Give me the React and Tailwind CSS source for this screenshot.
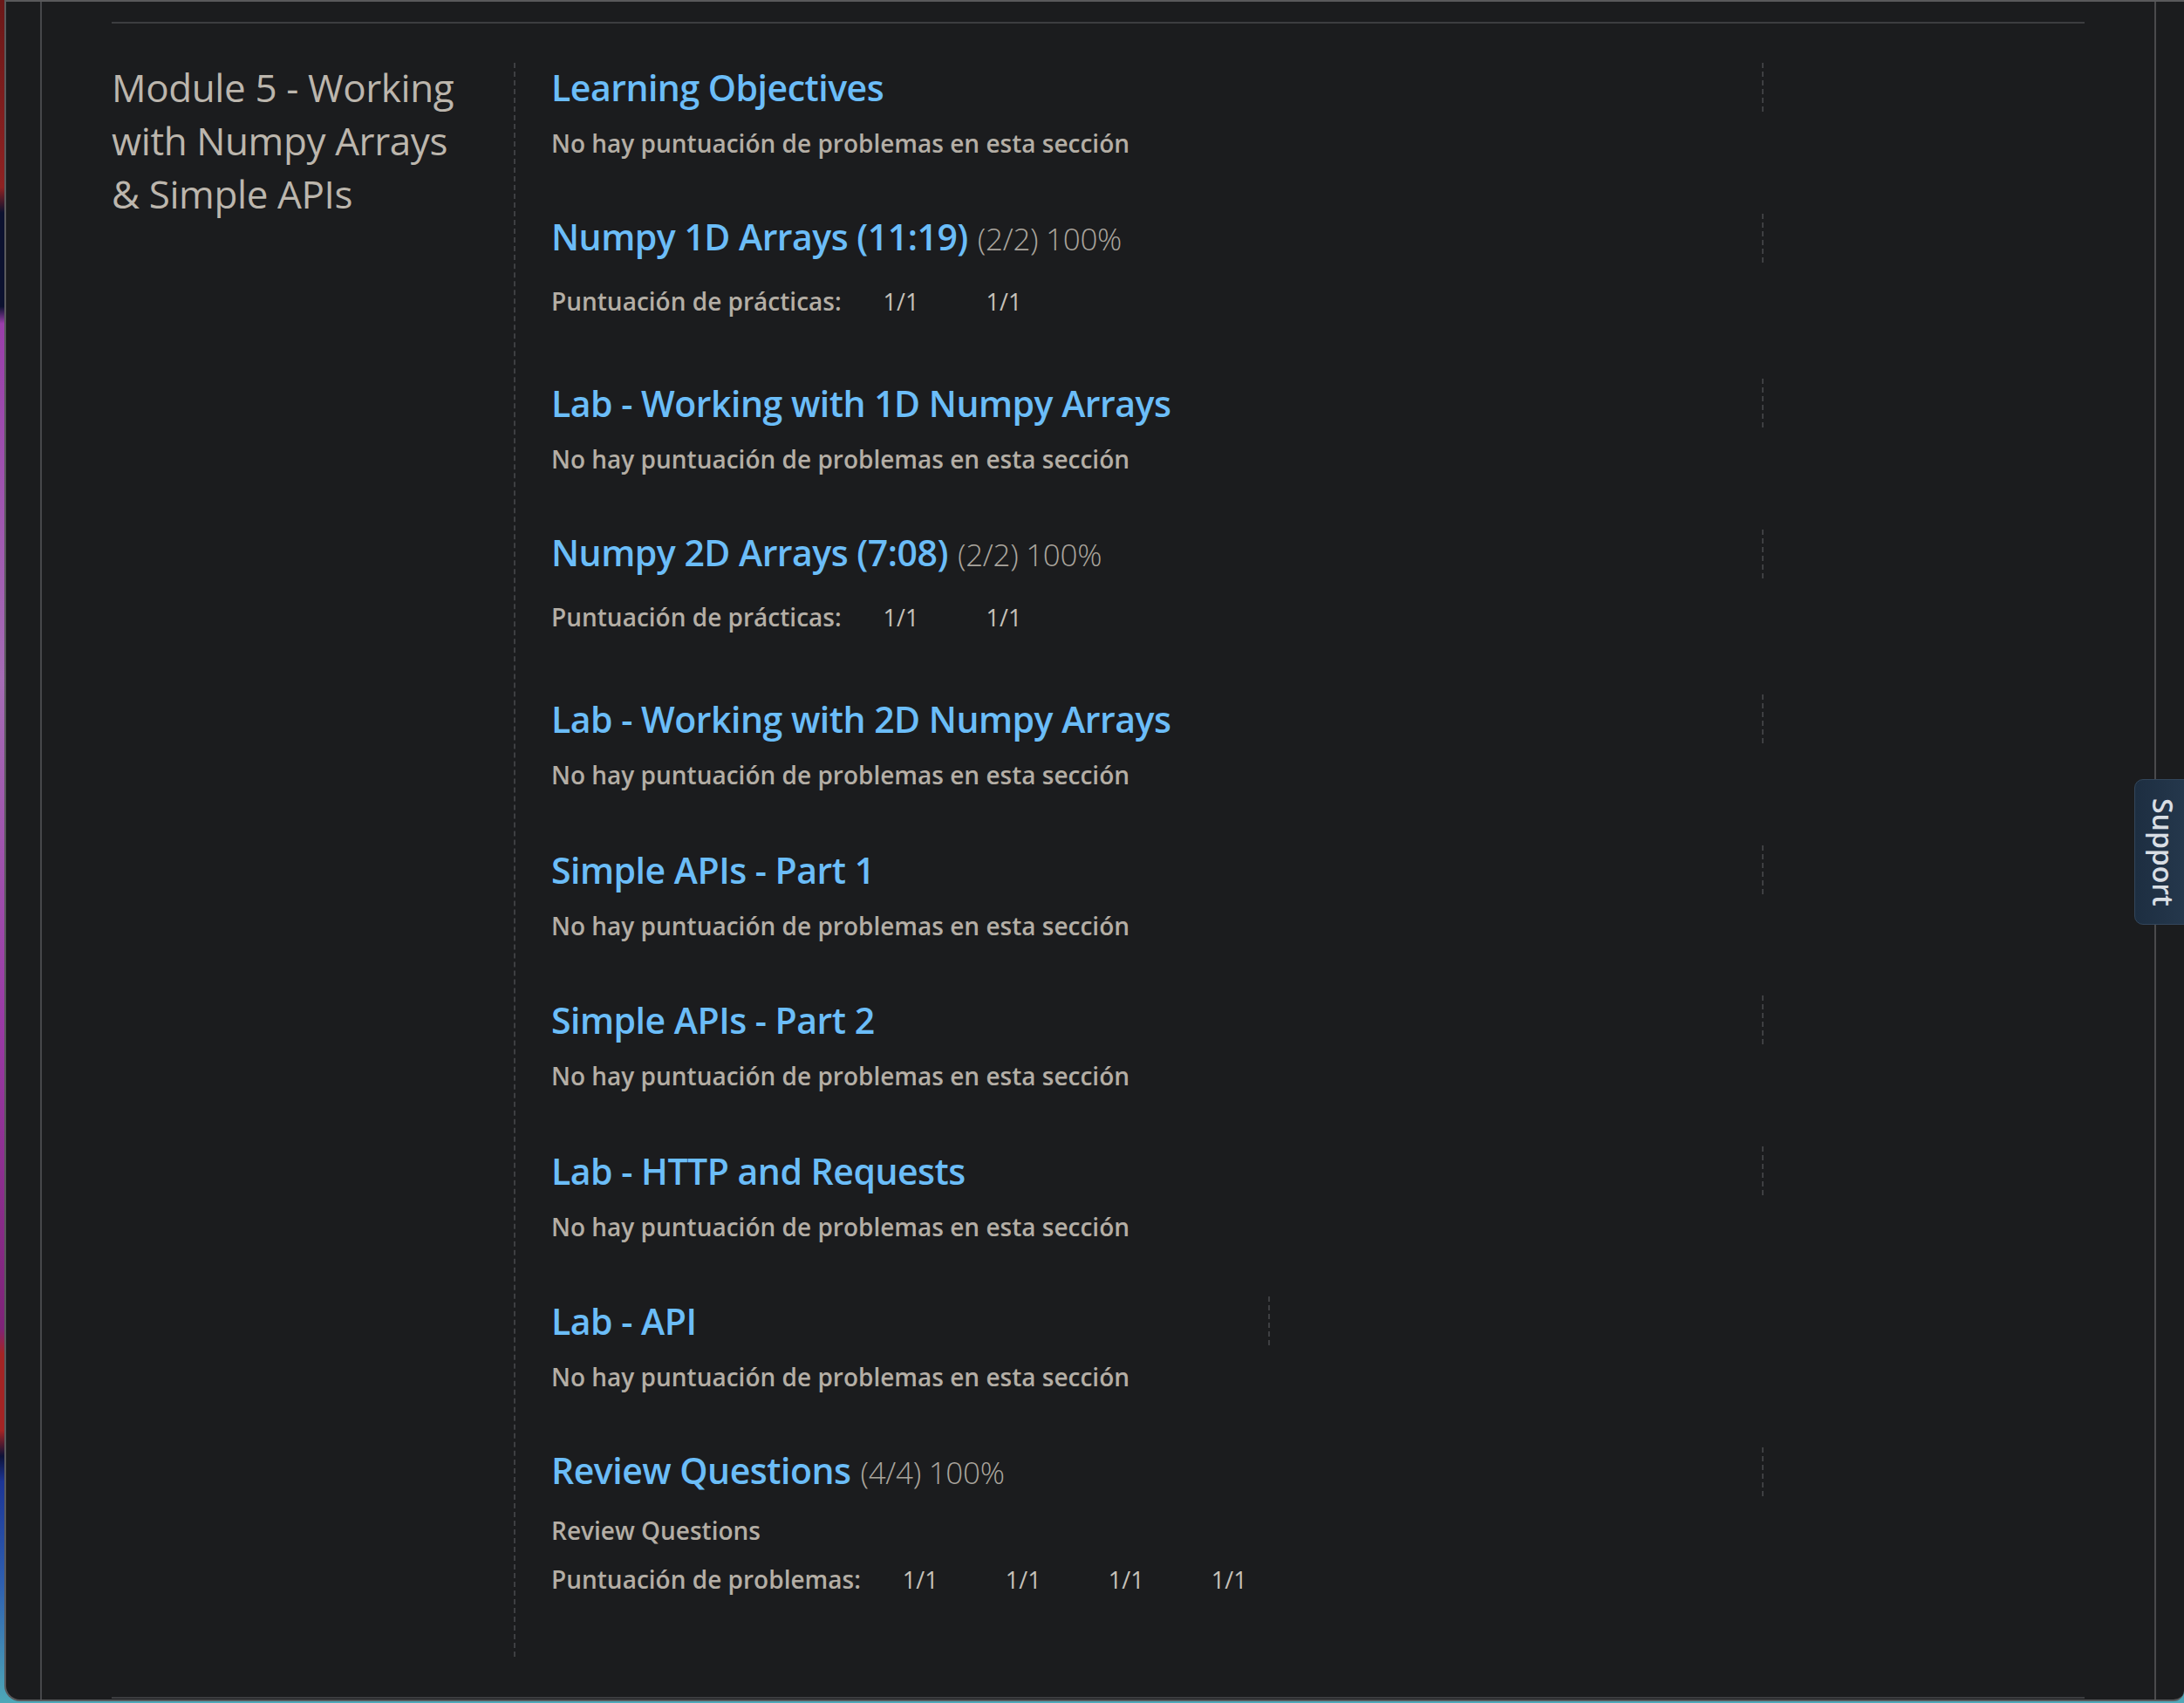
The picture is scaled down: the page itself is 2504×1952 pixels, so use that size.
import React from "react";

const NO = "No hay puntuación de problemas en esta sección";

const sections = [
  { title: "Learning Objectives", sub: NO },
  { title: "Numpy 1D Arrays (11:19)", score: "(2/2) 100%", label: "Puntuación de prácticas:", vals: ["1/1", "1/1"] },
  { title: "Lab - Working with 1D Numpy Arrays", sub: NO },
  { title: "Numpy 2D Arrays (7:08)", score: "(2/2) 100%", label: "Puntuación de prácticas:", vals: ["1/1", "1/1"] },
  { title: "Lab - Working with 2D Numpy Arrays", sub: NO },
  { title: "Simple APIs - Part 1", sub: NO },
  { title: "Simple APIs - Part 2", sub: NO },
  { title: "Lab - HTTP and Requests", sub: NO },
  { title: "Lab - API", sub: NO, narrow: true },
  { title: "Review Questions", score: "(4/4) 100%", sub: "Review Questions", label: "Puntuación de problemas:", vals: ["1/1", "1/1", "1/1", "1/1"], review: true },
];

function Section({ s }) {
  return (
    <div className="mb-[60.5px]">
      <div
        className={
          s.narrow
            ? "w-[824px] h-[56px] border-r-2 border-dashed border-[#3e3f42] flex items-center"
            : "w-[1390px] h-[56px] border-r-2 border-dashed border-[#3e3f42] flex items-center"
        }
      >
        <h3 className="text-[41px] leading-[56px] tracking-[-0.5px] font-semibold text-[#6bbdf8] whitespace-nowrap">
          {s.title}
          {s.score && (
            <span className="ml-[11px] text-[35px] tracking-[-0.3px] font-light text-[#aaa59d]">{s.score}</span>
          )}
        </h3>
      </div>
      {s.sub && (
        <p
          className={
            s.review
              ? "mt-[19px] text-[28px] leading-[40px] font-semibold text-[#b4aea5]"
              : "mt-[16px] text-[28px] leading-[40px] font-semibold text-[#b4aea5]"
          }
        >
          {s.sub}
        </p>
      )}
      {s.label && (
        <div
          className={
            s.review
              ? "mt-[8px] py-[8px] flex items-baseline"
              : "mt-[16px] py-[8px] flex items-baseline"
          }
        >
          <span className="text-[28px] leading-[40px] font-semibold text-[#b4aea5] mr-[48px]">{s.label}</span>
          {s.vals.map((v, i) => (
            <span key={i} className="w-[118px] text-[27px] leading-[40px] font-normal text-[#c6c1b9]">
              {v}
            </span>
          ))}
        </div>
      )}
    </div>
  );
}

export default function App() {
  return (
    <div className="relative w-[2504px] h-[1952px] overflow-hidden font-['Open_Sans',sans-serif] bg-[linear-gradient(180deg,#6b1818_0%,#8f2222_11%,#0c1230_12.5%,#0c1230_18%,#9a3eab_19%,#a56cb5_40%,#9a3aa6_60%,#7e2378_78%,#a42424_79.5%,#a42424_84%,#0d1238_85.5%,#1c3596_87%,#2e5fb0_93%,#4ea8b8_100%)]">
      <div className="ml-[5px] h-[1950px] flex bg-[#1b1c1e] border-t-2 border-l-2 border-b-2 border-[#59595b] rounded-bl-[18px] rounded-br-[12px]">
        <div className="w-[41px] shrink-0 border-r-2 border-[#46474a]" />
        <main className="flex-1 pl-[80px] pr-[80px] pt-[23px] flex flex-col">
          <section className="border-t-2 border-b-2 border-[#3c3d40] pt-[45px] pb-[46px] flex">
            <div className="w-[461px] shrink-0">
              <h2 className="w-[410px] -mt-[2px] text-[44px] leading-[61px] tracking-[-0.4px] font-normal text-[#bcb6ad]">
                Module 5 - Working with Numpy Arrays &amp; Simple APIs
              </h2>
            </div>
            <div className="flex-1 border-l-2 border-dashed border-[#3e3f42] pl-[41px]">
              {sections.map((s, i) => (
                <Section key={i} s={s} />
              ))}
            </div>
          </section>
        </main>
        <div className="w-[34px] shrink-0 border-l-2 border-[#4a4a4c]" />
      </div>
      <div className="absolute left-[2447px] top-[893px] w-[70px] h-[167px] rounded-l-[10px] bg-[linear-gradient(90deg,#1d2e41,#26394e)] border border-[#33465b] flex items-center justify-start pl-[16px]">
        <span className="[writing-mode:vertical-rl] text-[32px] font-semibold text-[#d9dee4] leading-none">Support</span>
      </div>
    </div>
  );
}
